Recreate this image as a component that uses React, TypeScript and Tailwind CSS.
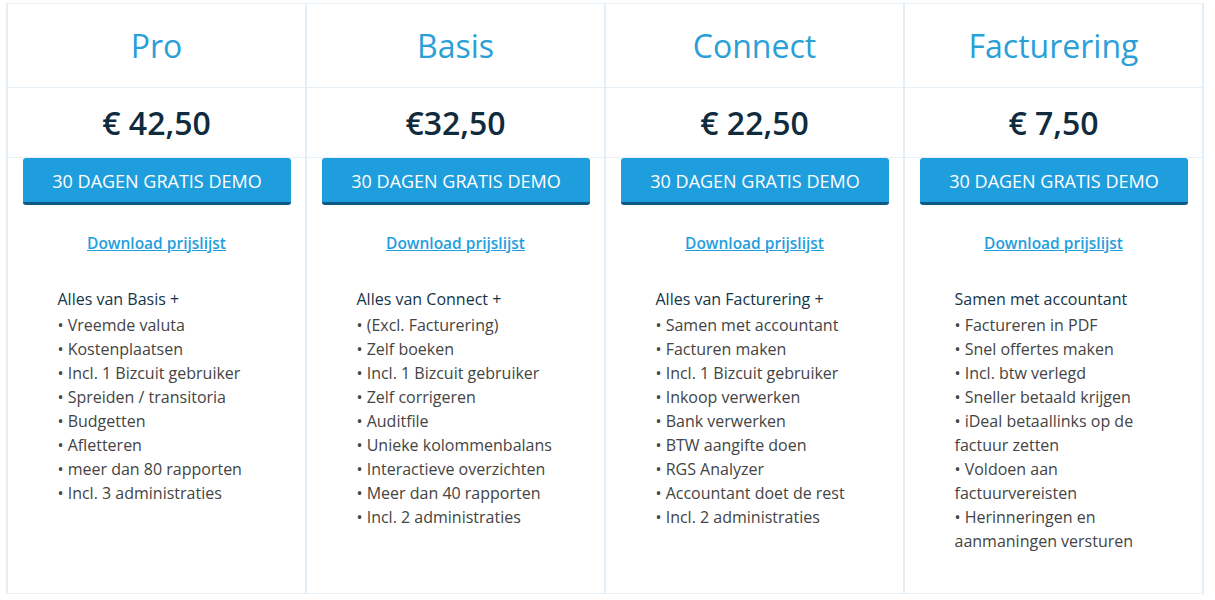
const plans = [
  {
    name: 'Pro',
    price: '€ 42,50',
    lead: 'Alles van Basis +',
    items: [
      'Vreemde valuta',
      'Kostenplaatsen',
      'Incl. 1 Bizcuit gebruiker',
      'Spreiden / transitoria',
      'Budgetten',
      'Afletteren',
      'meer dan 80 rapporten',
      'Incl. 3 administraties',
    ],
  },
  {
    name: 'Basis',
    price: '€32,50',
    lead: 'Alles van Connect +',
    items: [
      '(Excl. Facturering)',
      'Zelf boeken',
      'Incl. 1 Bizcuit gebruiker',
      'Zelf corrigeren',
      'Auditfile',
      'Unieke kolommenbalans',
      'Interactieve overzichten',
      'Meer dan 40 rapporten',
      'Incl. 2 administraties',
    ],
  },
  {
    name: 'Connect',
    price: '€ 22,50',
    lead: 'Alles van Facturering +',
    items: [
      'Samen met accountant',
      'Facturen maken',
      'Incl. 1 Bizcuit gebruiker',
      'Inkoop verwerken',
      'Bank verwerken',
      'BTW aangifte doen',
      'RGS Analyzer',
      'Accountant doet de rest',
      'Incl. 2 administraties',
    ],
  },
  {
    name: 'Facturering',
    price: '€ 7,50',
    lead: 'Samen met accountant',
    items: [
      'Factureren in PDF',
      'Snel offertes maken',
      'Incl. btw verlegd',
      'Sneller betaald krijgen',
      'iDeal betaallinks op de factuur zetten',
      'Voldoen aan factuurvereisten',
      'Herinneringen en aanmaningen versturen',
    ],
  },
]

export default function App() {
  return (
    <div className="min-h-[600px] bg-white pt-[3px] pl-[6px] font-['Open_Sans','Liberation_Sans',sans-serif]">
      <div className="flex w-fit border-t border-b border-[#e7eff7]">
        {plans.map((p, i) => (
          <div
            key={p.name}
            className={`flex flex-col border-l-2 border-[#e4eef7] ${i === plans.length - 1 ? 'w-[301px] border-r-2' : 'w-[299px]'}`}
          >
            <div className="flex h-[84px] items-center justify-center border-b border-[#e7eff7]">
              <h2 className="text-[32px] font-normal leading-none text-[#2a9fd8]">{p.name}</h2>
            </div>
            <div className="flex h-[70px] items-center justify-center border-b border-[#e7eff7]">
              <span className="text-[32px] font-semibold leading-none text-[#0f2b3d]">{p.price}</span>
            </div>
            <div className="pl-[15px] pr-[14px]">
              <button className="h-[47px] w-full rounded-[3px] border-b-[3px] border-[#0b5a86] bg-[#1f9ede] pt-[3px] text-[18px] uppercase text-white">
                30 dagen gratis demo
              </button>
            </div>
            <div className="mt-[26px] text-center">
              <a href="#" className="text-[15.5px] font-semibold leading-[22px] text-[#1f9ede] underline">
                Download prijslijst
              </a>
            </div>
            <div className="mx-auto mt-[32px] mb-[40px] w-[198px] text-[16px] leading-[24px]">
              <p className="mb-[2px] text-[#14354a]">{p.lead}</p>
              <ul className="text-[#444444]">
                {p.items.map(it => (
                  <li key={it}>• {it}</li>
                ))}
              </ul>
            </div>
            <div className="flex-1" />
          </div>
        ))}
      </div>
    </div>
  )
}
